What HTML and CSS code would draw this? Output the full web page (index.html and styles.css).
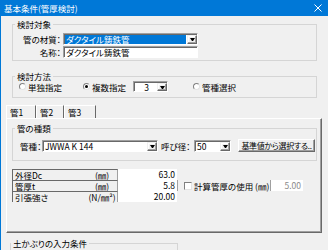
FILE: index.html
```html
<!DOCTYPE html>
<html lang="ja">
<head>
<meta charset="utf-8">
<link rel="stylesheet" href="styles.css">
</head>
<body>
<div class="window">
  <div class="titlebar">
    <span class="title">基本条件(管厚検討)</span>
    <svg class="close" width="8" height="8" viewBox="0 0 8 8"><path d="M0.5 0.5L7.5 7.5M7.5 0.5L0.5 7.5" stroke="#fff" stroke-width="1"/></svg>
  </div>
  <div class="content">
    <div class="group g1">
      <div class="ghead"><span class="glegend">検討対象</span></div>
      <div class="gbody">
        <div class="frow">
          <span class="flabel">管の材質：</span>
          <div class="combo w135"><span class="cval sel">ダクタイル鋳鉄管</span><span class="drop"></span></div>
        </div>
        <div class="frow">
          <span class="flabel">名称：</span>
          <div class="field w135">ダクタイル鋳鉄管</div>
        </div>
      </div>
    </div>

    <div class="group g2">
      <div class="ghead"><span class="glegend">検討方法</span></div>
      <div class="gbody">
        <div class="radios">
          <span class="radio r1"><span class="rb"></span>単独指定</span>
          <span class="radio r2"><span class="rb on"></span>複数指定</span>
          <div class="combo w35"><span class="cval center">3</span><span class="drop"></span></div>
          <span class="radio r3"><span class="rb"></span>管種選択</span>
        </div>
      </div>
    </div>

    <div class="tabs">
      <span class="tab t1">管1</span>
      <span class="tab t2">管2</span>
      <span class="tab t3">管3</span>
    </div>
    <div class="panel">
      <div class="group g3">
        <div class="ghead"><span class="glegend">管の種類</span></div>
        <div class="gbody">
          <div class="krow">
            <span class="klabel">管種：</span>
            <div class="combo w116"><span class="cval">JWWA K 144</span><span class="drop"></span></div>
            <span class="klabel2">呼び径：</span>
            <div class="combo w37"><span class="cval">50</span><span class="drop"></span></div>
            <span class="btn">基準値から選択する..</span>
          </div>
        </div>
      </div>

      <div class="table">
        <div class="trow">
          <div class="tlabel"><span class="tname">外径Dc</span><span class="tunit">(㎜)</span></div>
          <div class="tval">63.0</div>
        </div>
        <div class="trow">
          <div class="tlabel"><span class="tname">管厚t</span><span class="tunit">(㎜)</span></div>
          <div class="tval">5.8</div>
          <div class="tchk"><span class="cb"></span>計算管厚の使用 (㎜)</div>
          <div class="tval2">5.00</div>
        </div>
        <div class="trow">
          <div class="tlabel"><span class="tname">引張強さ</span><span class="tunit">(N/㎜²)</span></div>
          <div class="tval">20.00</div>
        </div>
      </div>
    </div>

    <div class="group g4">
      <div class="ghead"><span class="glegend">土かぶりの入力条件</span></div>
      <div class="gbody"></div>
    </div>
  </div>
</div>
</body>
</html>
```

FILE: styles.css
```css
html, body {
  margin: 0;
  background: #f0f0f0;
}
body {
  font-family: "Noto Sans CJK JP", "Noto Sans", sans-serif;
  font-size: 8.5px;
  line-height: 10px;
  color: #000;
  font-feature-settings: "palt";
}
.window {
  width: 328px;
  height: 250px;
  overflow: hidden;
  box-sizing: border-box;
  border-left: 1px solid #0078d7;
  background: #f0f0f0;
}
.titlebar {
  height: 16px;
  background: #0078d7;
  color: #fff;
  display: flex;
  align-items: center;
  justify-content: space-between;
  padding: 0 6px 0 3px;
}
.close { display: block; }

/* group box */
.group { margin: 0 11px; }
.ghead { display: flex; height: 10px; }
.ghead::before,
.ghead::after {
  content: "";
  margin-top: 5px;
  border-top: 1px solid #d5d5d5;
}
.ghead::before { width: 2px; border-left: 1px solid #d5d5d5; }
.ghead::after { flex: 1; border-right: 1px solid #d5d5d5; }
.glegend { padding: 0 2px; line-height: 10px; white-space: nowrap; }
.gbody { border: 1px solid #d5d5d5; border-top: none; }

.g1 { margin-top: 3px; }
.g1 .gbody { padding: 4px 0 2px; }
.frow { display: flex; align-items: center; height: 12px; }
.frow + .frow { margin-top: 1px; }
.flabel { width: 48px; text-align: right; margin-right: 2px; white-space: nowrap; }

.combo {
  display: flex;
  box-sizing: border-box;
  height: 12px;
  background: #fff;
  border: 1px solid;
  border-color: #a0a0a0 #fff #fff #a0a0a0;
  box-shadow: inset 1px 1px 0 #696969;
  padding: 1px 0 0 1px;
  flex: none;
}
.cval {
  flex: 1;
  min-width: 0;
  padding-left: 1px;
  height: 9px;
  line-height: 9px;
  white-space: nowrap;
}
.cval.center { text-align: center; }
.sel { background: #0078d7; color: #fff; margin-right: 1px; }
.drop {
  width: 10px;
  box-sizing: border-box;
  background: #f0f0f0;
  border: 1px solid;
  border-color: #f0f0f0 #696969 #696969 #f0f0f0;
  box-shadow: inset -1px -1px 0 #a0a0a0, inset 1px 1px 0 #fff;
  display: flex;
  align-items: center;
  justify-content: center;
}
.drop::after {
  content: "";
  width: 1px;
  border-left: 2px solid transparent;
  border-right: 2px solid transparent;
  border-top: 3px solid #000;
}
.w135 { width: 135px; }
.w35 { width: 35px; height: 11px; }
.w116 { width: 116px; }
.w37 { width: 37px; }

.field {
  box-sizing: border-box;
  height: 12px;
  background: #fff;
  border: 1px solid;
  border-color: #a0a0a0 #fff #fff #a0a0a0;
  box-shadow: inset 1px 1px 0 #696969;
  padding-left: 2px;
  line-height: 10px;
  white-space: nowrap;
}

.g2 { margin-top: 10px; }
.g2 .gbody { padding: 0 0 5px; }
.radios { display: flex; align-items: center; height: 11px; }
.radio { display: flex; align-items: center; white-space: nowrap; flex: none; }
.r1 { width: 64px; margin-left: 6px; }
.r2 { width: 50px; }
.r3 { margin-left: 25px; }
.rb {
  width: 7px;
  height: 7px;
  box-sizing: border-box;
  border-radius: 50%;
  background: #fff;
  border: 1px solid;
  border-color: #808080 #e3e3e3 #e3e3e3 #808080;
  margin-right: 2px;
  display: flex;
  align-items: center;
  justify-content: center;
}
.rb.on::after {
  content: "";
  width: 3px;
  height: 3px;
  border-radius: 50%;
  background: #000;
}

.tabs { display: flex; margin: 7px 0 0 5px; height: 13px; }
.tab {
  box-sizing: border-box;
  height: 13px;
  padding: 1px 0 0 3px;
  border-left: 1px solid #fff;
  border-top: 1px solid #fff;
  border-right: 1px solid #696969;
  white-space: nowrap;
}
.t1 { width: 30px; }
.t2 { width: 28px; }
.t3 { width: 32px; }

.panel {
  margin: 0 6px 0 5px;
  height: 115px;
  box-sizing: border-box;
  border: 1px solid;
  border-color: #fff #696969 #696969 #fff;
  box-shadow: inset -1px -1px 0 #a0a0a0;
  padding-top: 4px;
}
.g3 { margin: 0 4px 0 5px; }
.g3 .gbody { padding: 6px 0 8px 7px; }
.krow { display: flex; align-items: center; height: 13px; }
.klabel { width: 22px; white-space: nowrap; }
.klabel2 { width: 33px; margin-left: 3px; white-space: nowrap; }
.btn {
  box-sizing: border-box;
  width: 77px;
  height: 13px;
  margin-left: 7px;
  background: #f0f0f0;
  border: 1px solid;
  border-color: #fff #696969 #696969 #fff;
  box-shadow: inset -1px -1px 0 #a0a0a0;
  text-align: center;
  font-size: 8px;
  letter-spacing: -0.3px;
  line-height: 11px;
  white-space: nowrap;
}

.table { margin: 8px 0 0 5px; }
.trow { display: flex; height: 11px; }
.tlabel {
  width: 106px;
  box-sizing: border-box;
  display: flex;
  border-top: 1px solid #696969;
  border-left: 1px solid #696969;
  border-right: 1px solid #a0a0a0;
  padding-left: 2px;
  line-height: 10px;
  white-space: nowrap;
}
.tname { flex: 1; }
.tunit { width: 30px; text-align: center; }
.tval {
  width: 59px;
  box-sizing: border-box;
  background: #fff;
  text-align: right;
  padding-right: 2px;
  line-height: 11px;
}
.tchk {
  display: flex;
  align-items: center;
  width: 94px;
  box-sizing: border-box;
  border-left: 1px solid #a0a0a0;
  border-right: 1px solid #a0a0a0;
  padding-left: 6px;
  white-space: nowrap;
}
.cb {
  width: 8px;
  height: 8px;
  box-sizing: border-box;
  background: #fff;
  border: 1px solid;
  border-color: #808080 #e3e3e3 #e3e3e3 #808080;
  margin-right: 2px;
}
.tval2 {
  width: 32px;
  box-sizing: border-box;
  background: #fff;
  color: #8a8a8a;
  text-align: right;
  padding-right: 2px;
  line-height: 11px;
}

.g4 { margin: 5px 0 0 9px; width: 168px; }
.g4 .ghead::before { width: 0; }
.g4 .gbody { height: 20px; }
```
